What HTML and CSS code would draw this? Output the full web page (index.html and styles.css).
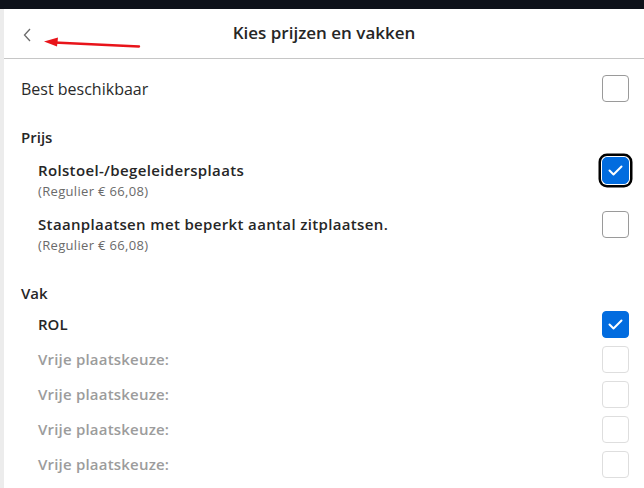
FILE: index.html
```html
<!DOCTYPE html>
<html lang="nl">
<head>
<meta charset="utf-8">
<title>Kies prijzen en vakken</title>
<link rel="stylesheet" href="styles.css">
</head>
<body>
<div class="topbar"></div>
<div class="frame">
  <div class="side"></div>
  <div class="panel">
    <header class="header">
      <button class="back" aria-label="Terug">
        <svg width="8" height="14" viewBox="0 0 8 14"><path d="M7 1 L1.5 7 L7 13" fill="none" stroke="#6b6b6b" stroke-width="1.3"/></svg>
      </button>
      <h1 class="title">Kies prijzen en vakken</h1>
      <svg class="annot" width="100" height="14" viewBox="0 0 100 14"><path d="M10 5.5 L95 9.5" stroke="#e8141a" stroke-width="2.4" stroke-linecap="round"/><path d="M0 4.5 L14 0.5 L13 9.5 Z" fill="#e8141a"/></svg>
    </header>
    <main class="content">
      <div class="row best">
        <span class="label light">Best beschikbaar</span>
        <span class="box"></span>
      </div>

      <h2 class="section">Prijs</h2>
      <div class="item first">
        <div class="text">
          <div class="name">Rolstoel-/begeleidersplaats</div>
          <div class="sub">(Regulier € 66,08)</div>
        </div>
        <span class="box checked focus"><svg width="27" height="27" viewBox="0 0 27 27"><path d="M7.5 13.5 L11.5 17.5 L19.5 9.5" fill="none" stroke="#fff" stroke-width="2" stroke-linecap="round" stroke-linejoin="round"/></svg></span>
      </div>
      <div class="item">
        <div class="text">
          <div class="name">Staanplaatsen met beperkt aantal zitplaatsen.</div>
          <div class="sub">(Regulier € 66,08)</div>
        </div>
        <span class="box"></span>
      </div>

      <h2 class="section vak">Vak</h2>
      <div class="vrow rol">
        <span class="name">ROL</span>
        <span class="box checked"><svg width="27" height="27" viewBox="0 0 27 27"><path d="M7.5 13.5 L11.5 17.5 L19.5 9.5" fill="none" stroke="#fff" stroke-width="2" stroke-linecap="round" stroke-linejoin="round"/></svg></span>
      </div>
      <div class="vrow disabled"><span class="name">Vrije plaatskeuze:</span><span class="box"></span></div>
      <div class="vrow disabled"><span class="name">Vrije plaatskeuze:</span><span class="box"></span></div>
      <div class="vrow disabled"><span class="name">Vrije plaatskeuze:</span><span class="box"></span></div>
      <div class="vrow disabled"><span class="name">Vrije plaatskeuze:</span><span class="box"></span></div>
    </main>
  </div>
</div>
</body>
</html>
```
FILE: styles.css
```css
* { box-sizing: border-box; }
html, body { margin: 0; padding: 0; background: #fff; }
body {
  font-family: "Open Sans", Lato, "Liberation Sans", sans-serif;
  color: #262626;
  width: 644px;
  height: 488px;
  overflow: hidden;
}
.topbar { height: 9px; background: #0e121a; }
.frame { display: flex; height: 479px; }
.side { width: 4px; background: #ececec; flex: none; }
.panel { flex: 1; display: flex; flex-direction: column; }
.header {
  position: relative;
  height: 50px;
  border-bottom: 1px solid #c6c6c6;
  display: flex;
  align-items: center;
  justify-content: center;
}
.back {
  position: absolute;
  left: 17px;
  top: 18px;
  border: 0;
  background: none;
  padding: 0;
  width: 12px;
  height: 16px;
  display: flex;
  align-items: center;
  justify-content: center;
}
.annot { position: absolute; left: 40px; top: 28px; }
.title {
  margin: 0 0 2px;
  font-size: 17px;
  line-height: 24px;
  font-weight: 600;
  color: #262626;
}
.content { padding: 0 15px 0 17px; }
.box {
  width: 27px;
  height: 27px;
  border: 1px solid #9a9a9a;
  border-radius: 4px;
  flex: none;
  display: flex;
  align-items: center;
  justify-content: center;
  background: #fff;
}
.box.checked { background: #026cdf; border-color: #026cdf; }
.box.checked svg { flex: none; margin: -1px; }
.box.focus { box-shadow: 0 0 0 1px #fff, 0 0 0 3.5px #000; border-radius: 5px; }
.row { display: flex; align-items: center; justify-content: space-between; }
.best { padding: 16px 0 16px; }
.label { font-size: 16px; line-height: 22px; }
.light { font-weight: 400; color: #2a2a2a; }
.section {
  margin: 9px 0 0;
  font-size: 15px;
  font-weight: 600;
  line-height: 20px;
  color: #262626;
}
.item {
  display: flex;
  justify-content: space-between;
  align-items: flex-start;
  padding-left: 17px;
  margin-top: 12px;
}
.item .box { margin-top: -2px; }
.name { font-size: 15px; font-weight: 600; line-height: 22px; color: #262626; }
.item .name { letter-spacing: 0.35px; }
.sub { font-size: 13px; line-height: 20px; color: #6a6a6a; letter-spacing: 0.33px; }
.section.vak { margin-top: 28px; }
.vrow {
  display: flex;
  align-items: center;
  justify-content: space-between;
  height: 35px;
  padding-left: 17px;
}
.vrow.rol { margin-top: 3.5px; }
.vrow.disabled .name { color: #9c9c9c; letter-spacing: 0.2px; }
.vrow.disabled .box { border-color: #dedede; }
```
